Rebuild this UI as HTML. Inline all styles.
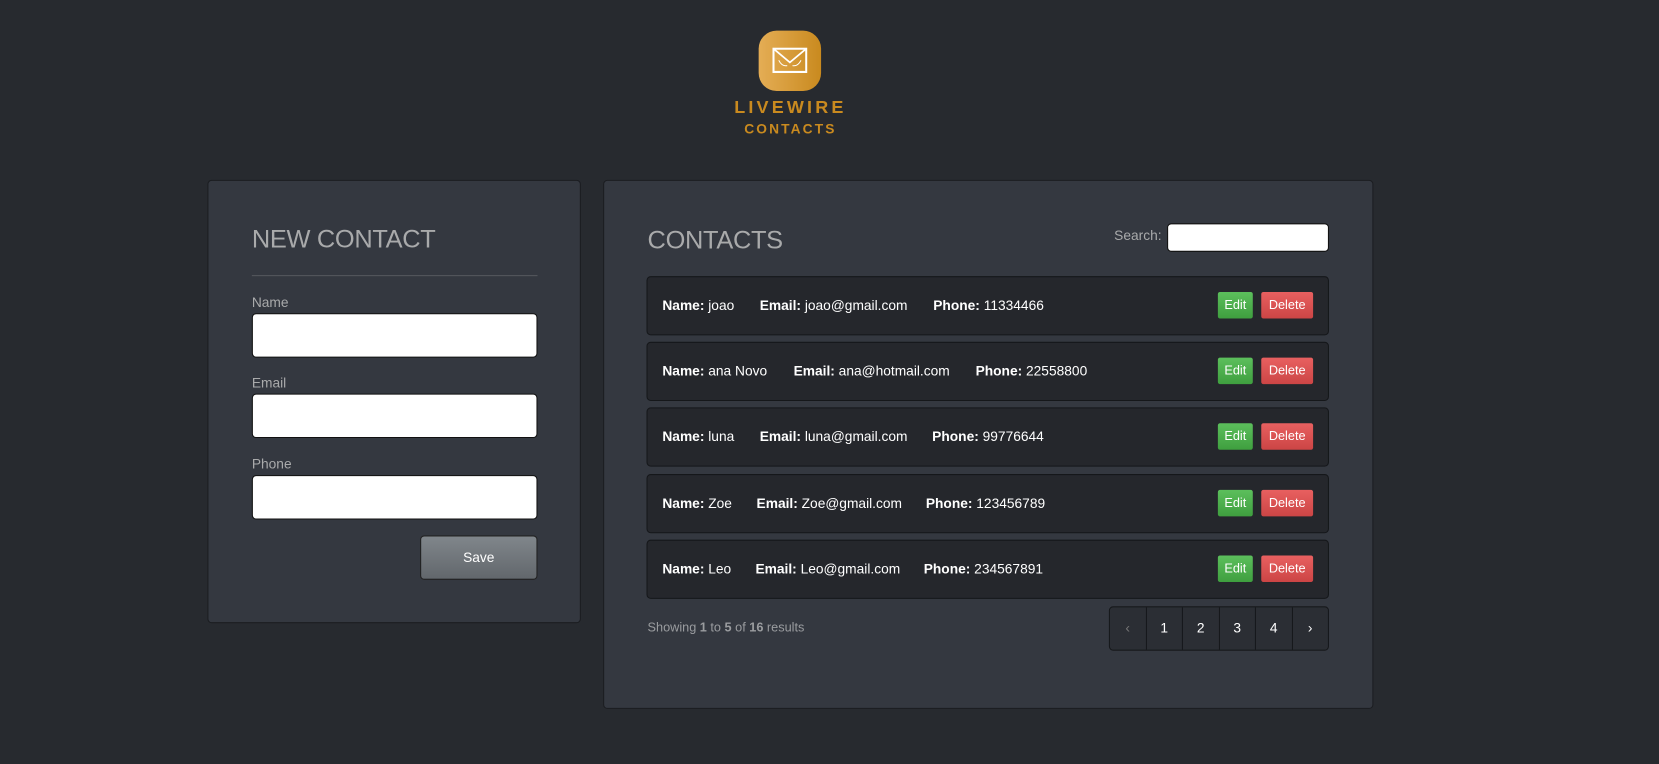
<!DOCTYPE html>
<html><head><meta charset="utf-8"><style>
*{box-sizing:border-box;margin:0;padding:0}
body{width:1659px;height:764px;background:#272a2f;font-family:"Liberation Sans",sans-serif;position:relative;overflow:hidden;color:#fff}
#w{position:absolute;left:0;top:0;width:1568px;height:722px;transform:scale(1.0581);transform-origin:0 0}
.card{position:absolute;background:#343840;border:1px solid #1b1d21;border-radius:4px}
h2{position:absolute;font-weight:normal;color:#a9aaab;font-size:24px;letter-spacing:-0.3px}
label{position:absolute;color:#a9aaab;font-size:13px}
.inp{position:absolute;background:#fff;border:1px solid #111;border-radius:4px}
.row{position:absolute;left:40px;width:645px;height:56px;background:#25272c;border:1px solid #15171a;border-radius:4px;font-size:13px}
.row span{position:absolute;top:19px;white-space:nowrap}
.row b{font-weight:bold}
.btn{position:absolute;top:14px;height:25px;font-size:12px;line-height:25px;text-align:center;border-radius:2px;color:#fff}
.e{left:539px;width:33px;background:linear-gradient(#5cbf5c,#3f9f3f)}
.d{left:580px;width:49px;background:linear-gradient(#e86060,#cc4545)}
.pg{position:absolute;left:477px;top:402px;width:208px;height:42px;border:1px solid #16181b;border-radius:4px;background:#2b2e34;display:flex}
.pg div{flex:1;border-right:1px solid #16181b;text-align:center;line-height:40px;font-size:13px}
.pg div:last-child{border-right:none}
</style></head><body><div id="w">
<div style="position:absolute;left:717px;top:29px;width:59px;height:57px;border-radius:17px;background:linear-gradient(90deg,#e4ad55,#c98a1f)"></div>
<svg style="position:absolute;left:730px;top:45px" width="33" height="25" viewBox="0 0 33 25"><rect x="1" y="1" width="31" height="22" fill="none" stroke="#fff" stroke-width="2"/><path d="M1 1 L16.5 14 L32 1" fill="none" stroke="#fff" stroke-width="1.6"/><path d="M6 12 Q9 18 14 17 M27 12 Q24 18 19 17" fill="none" stroke="#fff" stroke-width="1"/></svg>
<div style="position:absolute;left:691px;top:92px;width:112px;text-align:center;color:#c98a1f;font-weight:bold;font-size:17px;letter-spacing:3px">LIVEWIRE</div>
<div style="position:absolute;left:691px;top:114px;width:112px;text-align:center;color:#c98a1f;font-weight:bold;font-size:13px;letter-spacing:2px">CONTACTS</div>

<div class="card" style="left:196px;top:170px;width:353px;height:419px">
<h2 style="left:41px;top:42px">NEW CONTACT</h2>
<div style="position:absolute;left:41px;top:89px;width:270px;border-top:1px solid #55585d"></div>
<label style="left:41px;top:107px">Name</label>
<div class="inp" style="left:41px;top:125px;width:270px;height:42px"></div>
<label style="left:41px;top:183px">Email</label>
<div class="inp" style="left:41px;top:201px;width:270px;height:42px"></div>
<label style="left:41px;top:260px">Phone</label>
<div class="inp" style="left:41px;top:278px;width:270px;height:42px"></div>
<div style="position:absolute;left:200px;top:335px;width:111px;height:42px;border-radius:4px;background:linear-gradient(#80868b,#62676c);border:1px solid #222;text-align:center;line-height:40px;font-size:13px">Save</div>
</div>

<div class="card" style="left:570px;top:170px;width:728px;height:500px">
<h2 style="left:41px;top:43px">CONTACTS</h2>
<label style="left:482px;top:44px">Search:</label>
<div class="inp" style="left:532px;top:40px;width:153px;height:27px"></div>
<div class="row" style="top:90px"><span style="left:14px"><b>Name:</b> joao</span><span style="left:106px"><b>Email:</b> joao@gmail.com</span><span style="left:270px"><b>Phone:</b> 11334466</span><div class="btn e">Edit</div><div class="btn d">Delete</div></div>
<div class="row" style="top:152px"><span style="left:14px"><b>Name:</b> ana Novo</span><span style="left:138px"><b>Email:</b> ana@hotmail.com</span><span style="left:310px"><b>Phone:</b> 22558800</span><div class="btn e">Edit</div><div class="btn d">Delete</div></div>
<div class="row" style="top:214px"><span style="left:14px"><b>Name:</b> luna</span><span style="left:106px"><b>Email:</b> luna@gmail.com</span><span style="left:269px"><b>Phone:</b> 99776644</span><div class="btn e">Edit</div><div class="btn d">Delete</div></div>
<div class="row" style="top:277px"><span style="left:14px"><b>Name:</b> Zoe</span><span style="left:103px"><b>Email:</b> Zoe@gmail.com</span><span style="left:263px"><b>Phone:</b> 123456789</span><div class="btn e">Edit</div><div class="btn d">Delete</div></div>
<div class="row" style="top:339px"><span style="left:14px"><b>Name:</b> Leo</span><span style="left:102px"><b>Email:</b> Leo@gmail.com</span><span style="left:261px"><b>Phone:</b> 234567891</span><div class="btn e">Edit</div><div class="btn d">Delete</div></div>
<div style="position:absolute;left:41px;top:415px;font-size:12px;color:#9a9c9f">Showing <b>1</b> to <b>5</b> of <b>16</b> results</div>
<div class="pg"><div style="color:#777">‹</div><div>1</div><div>2</div><div>3</div><div>4</div><div>›</div></div>
</div>
</div></body></html>
